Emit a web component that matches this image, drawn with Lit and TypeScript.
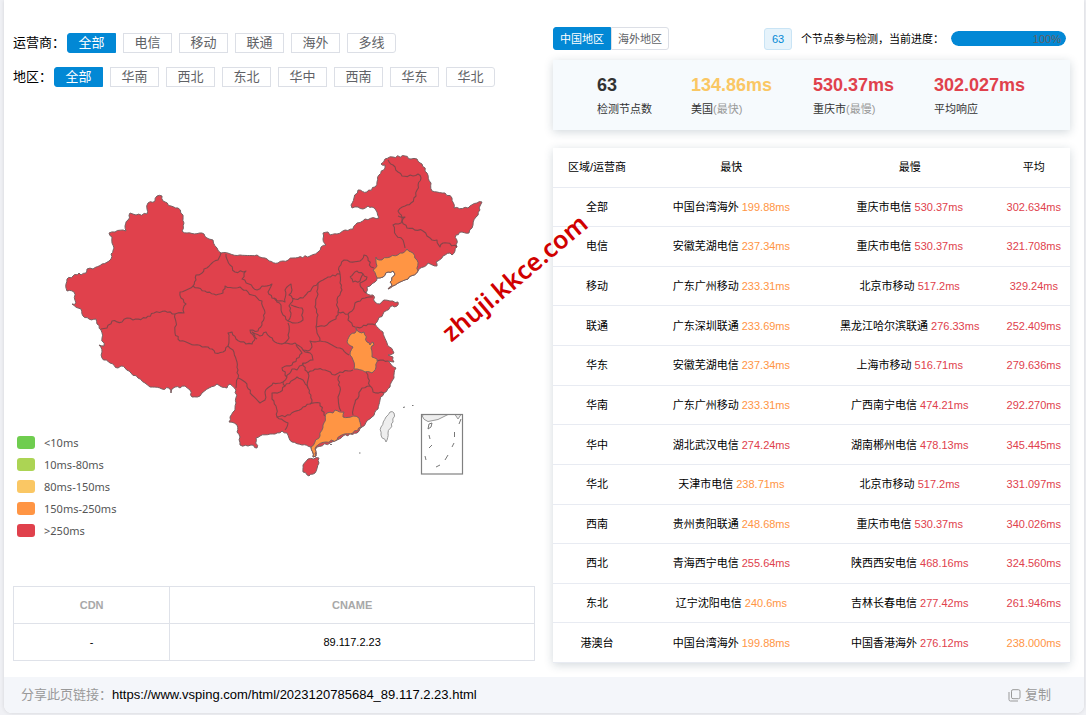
import { LitElement, html, css, svg } from "lit";
import { customElement, state } from "lit/decorators.js";
import { classMap } from "lit/directives/class-map.js";

type Level = "warn" | "bad";
interface Row {
  name: string;
  fast: string;
  fastMs: string;
  fastLevel: Level;
  slow: string;
  slowMs: string;
  avg: string;
  avgLevel: Level;
}

const row = (
  name: string, fast: string, fastMs: string, slow: string, slowMs: string, avg: string,
): Row => ({
  name, fast, fastMs, slow, slowMs, avg,
  fastLevel: parseFloat(fastMs) > 250 ? "bad" : "warn",
  avgLevel: parseFloat(avg) > 250 ? "bad" : "warn",
});

const ROWS: Row[] = [
  row("全部", "中国台湾海外", "199.88ms", "重庆市电信", "530.37ms", "302.634ms"),
  row("电信", "安徽芜湖电信", "237.34ms", "重庆市电信", "530.37ms", "321.708ms"),
  row("移动", "广东广州移动", "233.31ms", "北京市移动", "517.2ms", "329.24ms"),
  row("联通", "广东深圳联通", "233.69ms", "黑龙江哈尔滨联通", "276.33ms", "252.409ms"),
  row("华东", "安徽芜湖电信", "237.34ms", "上海市移动", "516.71ms", "279.636ms"),
  row("华南", "广东广州移动", "233.31ms", "广西南宁电信", "474.21ms", "292.270ms"),
  row("华中", "湖北武汉电信", "274.24ms", "湖南郴州电信", "478.13ms", "345.445ms"),
  row("华北", "天津市电信", "238.71ms", "北京市移动", "517.2ms", "331.097ms"),
  row("西南", "贵州贵阳联通", "248.68ms", "重庆市电信", "530.37ms", "340.026ms"),
  row("西北", "青海西宁电信", "255.64ms", "陕西西安电信", "468.16ms", "324.560ms"),
  row("东北", "辽宁沈阳电信", "240.6ms", "吉林长春电信", "277.42ms", "261.946ms"),
  row("港澳台", "中国台湾海外", "199.88ms", "中国香港海外", "276.12ms", "238.000ms"),
];

const LEGEND = [
  ["#6fcd4f", "<10ms"],
  ["#acd454", "10ms-80ms"],
  ["#fac764", "80ms-150ms"],
  ["#ff9544", "150ms-250ms"],
  ["#e0414c", ">250ms"],
];

const MAINLAND =
  "66,284 67,279 73,276 79,273 81,275 86,273 87,269 93,269 102,264 111,259 111,254 114,248 112,243 112,237 109,233 115,232 123,230 126,231 125,226 128,220 130,213 136,215 147,214 147,209 148,203 155,201 157,196 162,196 163,201 171,206 178,208 183,215 184,223 182,231 187,233 202,233 209,239 213,240 217,248 221,253 240,255 257,255 265,258 269,261 278,263 293,258 310,256 318,252 321,247 326,245 323,239 323,233 328,232 330,235 337,234 345,230 353,229 357,223 365,219 379,218 377,212 372,207 368,206 363,209 358,207 352,208 351,205 354,198 358,190 367,192 375,187 377,182 379,175 385,168 385,165 381,164 385,159 393,157 405,156 411,159 417,159 422,164 427,173 431,183 432,191 437,192 445,193 452,198 454,208 468,208 477,203 482,202 480,206 480,210 476,217 473,225 469,233 462,232 456,235 457,247 455,251 452,255 450,253 443,256 436,262 437,266 428,263 418,271 408,279 400,282 388,289 392,286 390,282 395,274 393,271 388,272 383,277 377,278 375,282 370,286 367,287 366,293 373,295 375,302 380,304 384,300 390,301 398,302 397,306 390,307 383,314 378,320 375,324 383,332 387,343 394,353 388,355 393,357 394,362 388,361 396,368 394,378 390,387 384,393 380,400 378,409 372,417 362,427 357,433 343,436 330,443 317,447 315,450 316,456 313,457 311,447 302,445 292,442 289,438 287,433 282,431 275,434 270,434 260,436 256,438 257,448 251,445 248,446 240,445 240,437 237,432 237,425 229,422 230,417 235,410 236,403 236,390 230,384 227,388 220,386 217,384 209,388 202,393 200,396 192,397 190,390 185,386 180,388 175,387 172,389 171,393 169,388 162,389 150,387 145,383 138,378 131,373 125,368 121,366 118,368 110,363 102,358 102,352 99,345 104,346 102,338 101,330 97,324 96,319 89,319 83,316 81,309 72,304 76,303 74,292 67,291";

const BORDERS = [
  "221,253 218,260 211,264 204,269 202,273 196,275 196,280 193,286",
  "193,286 180,292 181,298 186,304 183,310 184,313 175,314",
  "175,314 165,311 154,313 146,318 133,320 127,318 122,322 112,321 107,328 101,329",
  "175,314 176,322 175,333 180,341 194,345 208,347 212,349 215,353 223,352 228,346 229,340 228,333 232,332 236,339 246,344 252,344 255,338 252,332 260,336 266,332 270,337 277,343 282,344",
  "193,286 205,291 216,295 223,293 225,286 233,288 240,287 252,295 262,301 265,313 262,325 258,331 250,330 254,337 257,339",
  "226,254 230,265 235,272 246,271 242,279 249,284 257,290 262,286 272,284 268,292 272,298 278,301 285,302 285,290 291,284 292,290 289,295 295,299 303,298 308,292 318,283 328,277 340,274 339,267 344,260 350,262 360,261 364,255 368,258 371,267 374,268",
  "388,160 393,165 398,172 402,176 413,176 418,174 421,178 417,190 416,196 411,203 405,206 398,211 402,218 401,223 393,225 396,235 403,240 405,248",
  "398,216 405,217 402,221 407,228 423,231 427,236 432,240 437,240 440,247 443,243 447,243 457,247",
  "350,277 357,271 363,274 360,281 353,282 350,277",
  "363,274 367,277 364,281 360,283 363,289 366,293",
  "340,274 340,283 342,290 337,300 338,312 336,319 327,325 316,327",
  "318,283 317,297 315,307 318,315 316,327 317,333 320,341 332,345 340,348 349,355",
  "338,312 348,314 352,311 355,303 365,298 373,297",
  "348,314 348,320 355,327 362,327 368,324 375,325",
  "320,341 310,341 312,347 310,350 303,350 295,343 282,344 289,338 289,332 288,323",
  "274,298 281,305 283,315 288,321 291,313 289,306 293,299",
  "291,305 302,308 303,320 295,323 288,321",
  "228,346 233,350 237,362 238,378 236,388",
  "238,378 245,382 252,395 260,403 265,400 265,392 273,383 283,382 287,377 282,368 292,365 302,353 296,345",
  "303,350 312,355 313,360 303,363 305,370 308,373",
  "303,363 297,370 292,369 286,377",
  "283,382 285,386 297,377 303,380 308,388",
  "308,373 315,369 325,370 335,375 340,372 353,370",
  "308,373 308,388 312,400 310,404 303,407 290,415 277,417 276,406 272,399 272,393 280,392 285,386",
  "277,417 288,423 285,430",
  "310,404 320,403 324,415 327,417",
  "340,375 338,380 340,387 338,397 341,411",
  "353,415 355,403 362,388 370,386",
  "366,372 368,378 370,386 373,392 384,393",
  "377,361 383,360 388,361",
];

const LIAONING =
  "376,257 379,260 390,257 403,253 407,249 413,253 417,260 418,271 408,279 400,282 388,289 392,286 390,282 395,274 393,271 388,272 383,277 377,278 373,270 377,266";
const ANHUI =
  "356,328 359,332 364,332 367,342 370,345 373,342 374,345 371,348 372,357 377,359 376,367 372,373 365,372 354,369 353,360 350,355 353,347 347,342 350,335 355,333";
const GUANGDONG =
  "327,413 333,413 335,410 344,412 343,417 353,416 359,418 361,427 353,433 340,436 337,440 326,442 318,445 315,449 316,456 313,457 311,447 320,436 323,425";
const HAINAN = "308,459 319,458 319,463 315,473 309,476 303,472 303,465";
const TAIWAN = "390,412 394,413 393,422 388,433 386,442 381,435 381,427 386,417";

/** Turns a coarse outline into a ragged border line; the same segment always gets the same bends. */
function border(points: string, closed = false): string {
  const pts = points.split(" ").map((p) => p.split(",").map(Number));
  if (closed) pts.push(pts[0]);
  let d = `M${pts[0]}`;
  for (let i = 1; i < pts.length; i++) {
    const [a, b] = [pts[i - 1], pts[i]];
    const length = Math.hypot(b[0] - a[0], b[1] - a[1]);
    const steps = Math.max(1, Math.round(length / 2.6));
    for (let s = 1; s < steps; s++) {
      const t = s / steps;
      const x = a[0] + (b[0] - a[0]) * t;
      const y = a[1] + (b[1] - a[1]) * t;
      const n = Math.sin(x * 12.9 + y * 78.2) * 0.9;
      d += `L${(x - ((b[1] - a[1]) / length) * n).toFixed(1)} ${(y + ((b[0] - a[0]) / length) * n).toFixed(1)}`;
    }
    d += `L${b}`;
  }
  return closed ? d + "Z" : d;
}

@customElement("china-map")
export class ChinaMap extends LitElement {
  static styles = css`
    :host { display: block; }
    .map { display: block; width: 100%; height: auto; }
    .area { stroke: #776062; stroke-width: 1; stroke-linejoin: round; }
    .red { fill: #e0414c; }
    .orange { fill: #ff9544; }
    .empty { fill: #eee; stroke: #999; }
    .line { fill: none; stroke: #85454a; stroke-width: 1.1; stroke-linejoin: round; }
    .frame { fill: none; stroke: #808080; stroke-width: 1.2; }
    .dash { fill: none; stroke: #777; stroke-width: 1; }
  `;

  render() {
    return html`
      <svg class="map" viewBox="13 150 522 396" role="img" aria-label="中国地图">
        <path class="area red" d=${border(MAINLAND, true)} />
        ${BORDERS.map((b) => svg`<path class="line" d=${border(b)} />`)}
        ${[LIAONING, ANHUI, GUANGDONG].map((p) => svg`<path class="area orange" d=${border(p, true)} />`)}
        <path class="area red" d=${border(HAINAN, true)} />
        <path class="area empty" d=${border(TAIWAN, true)} />
        <path class="area empty" d="M422 415.500L424 414.500H448Q438 421 428 421.500Q423 420 422 415.500ZM455 414.500H461L458 419Z" />
        <rect class="frame" x="421.500" y="414.500" width="41" height="59.500" />
        <path class="dash" d="M429 424l3-1l-1 4l-3 2zM429 435l1 4M429 448l3-3M425 456l1 4M436 467l4-2M445 460l3-5M452 447l2-4M454.500 437v-5M459 424l2-5M403 407.500l2-.5M412 405.500h1.500M359 453h1.500M330 444.500h2" />
      </svg>
    `;
  }
}

@customElement("app-root")
export class AppRoot extends LitElement {
  @state() private carrier = "全部";
  @state() private region = "全部";
  @state() private scope = "中国地区";

  static styles = css`
    :host {
      display: block;
      box-sizing: border-box;
      min-height: 100vh;
      padding: 0 2px 2px 4px;
      background: #f0f1f5;
      font: 11px/16px "Liberation Sans", "Noto Sans CJK SC", sans-serif;
      color: #000;
    }
    * { box-sizing: border-box; }
    button { font: inherit; cursor: pointer; }
    .card {
      position: relative;
      background: #fff;
      border-radius: 0 0 8px 8px;
      box-shadow: 0 0 4px rgba(0, 0, 0, 0.12);
      overflow: hidden;
    }
    .columns {
      display: grid;
      grid-template-columns: 522fr 517fr;
      gap: 18px;
      padding: 27px 14px 14px 9px;
    }
    .left { padding-top: 6px; }
    .filter {
      display: flex;
      align-items: center;
      gap: 2px;
      height: 20px;
      margin-bottom: 14px;
      font-size: 13px;
    }
    .options { display: flex; gap: 7px; }
    .option {
      width: 49px;
      height: 20px;
      padding: 0;
      border: 1px solid #dcdfe6;
      background: #fff;
      color: #606266;
      line-height: 16px;
    }
    .option:first-child { border-radius: 3px 0 0 3px; }
    .option:last-child { border-radius: 0 3px 3px 0; }
    .option.active { background: #0288d5; border-color: #0288d5; color: #fff; }
    .mapbox { display: grid; margin-top: 63px; }
    .mapbox > * { grid-area: 1 / 1; }
    .legend {
      align-self: end;
      justify-self: start;
      display: grid;
      gap: 9px;
      margin: 0;
      padding: 0 0 9px 4px;
      list-style: none;
      font: 11px/13px "Noto Sans", sans-serif;
      color: #555;
    }
    .legend li { display: flex; gap: 9px; }
    .swatch { width: 18px; height: 13px; border-radius: 3px; }
    table { width: 100%; border-collapse: collapse; table-layout: fixed; text-align: center; }
    th, td { padding: 0; font-weight: normal; }
    .cname { margin-top: 40px; }
    .cname th, .cname td { height: 37px; border: 1px solid #dfe2e9; }
    .cname th { color: #a8a8a8; font-weight: bold; }
    .col-cdn { width: 30%; }
    .toolbar { display: flex; align-items: center; height: 23px; padding-right: 4px; }
    .tabs { display: flex; margin-right: auto; }
    .tab {
      height: 23px;
      padding: 0 6px;
      border: 1px solid #dcdfe6;
      background: #fff;
      color: #606266;
      line-height: 16px;
    }
    .tab:first-child { border-radius: 3px 0 0 3px; }
    .tab:last-child { border-radius: 0 3px 3px 0; }
    .tab.active { background: #0288d5; border-color: #0288d5; color: #fff; }
    .badge {
      width: 28px;
      height: 22px;
      margin-right: 9px;
      border: 1px solid #c9e4f5;
      border-radius: 3px;
      background: #e6f3fb;
      color: #0288d5;
      line-height: 20px;
      text-align: center;
    }
    .bar {
      width: 115px;
      height: 15px;
      margin-left: 7px;
      border-radius: 8px;
      background: #ebeef5;
      overflow: hidden;
    }
    .fill {
      height: 100%;
      padding-right: 5px;
      border-radius: 8px;
      background: #0288d5;
      color: #606266;
      text-align: right;
    }
    .panel { box-shadow: 0 2px 9px rgba(30, 60, 80, 0.2); }
    .stats {
      display: grid;
      grid-template-columns: 94fr 122fr 121fr 136fr;
      margin: 10px 0 18px;
      padding: 14px 0 13px 44px;
      background: #f6fafd;
      color: #333;
    }
    .value { font-size: 18px; font-weight: bold; line-height: 22px; }
    .label { margin-top: 5px; }
    .muted { color: #999; }
    .gold { color: #fac764; }
    .warn { color: #ff9544; }
    .bad { color: #e0414c; }
    .results { height: 515px; background: #fff; }
    .results th, .results td { height: 39px; border-bottom: 1px solid #e8ebf2; }
    .c1 { width: 17%; }
    .c2 { width: 35%; }
    .c3 { width: 34%; }
    .c4 { width: 14%; }
    .share {
      display: flex;
      align-items: center;
      height: 36px;
      padding: 0 33px 0 17px;
      background: #f4f6fa;
      color: #999;
      font-size: 13px;
    }
    .link { color: #000; text-decoration: none; }
    .copy {
      display: flex;
      align-items: center;
      gap: 4px;
      margin-left: auto;
      padding: 0;
      border: 0;
      background: none;
      color: #999;
    }
    .icon { width: 13px; height: 13px; }
    .mark {
      position: absolute;
      left: 510px;
      top: 277px;
      transform: translate(-50%, -50%) rotate(-40deg);
      font: 600 25px/32px "Noto Sans", sans-serif;
      color: #d00000;
      white-space: nowrap;
      pointer-events: none;
    }
  `;

  private filter(label: string, names: string[], current: string, pick: (n: string) => void) {
    return html`
      <div class="filter" role="group" aria-label=${label}>
        <span>${label}：</span>
        <div class="options">
          ${names.map((n) => html`<button
            class=${classMap({ option: true, active: n === current })}
            aria-pressed=${n === current}
            @click=${() => pick(n)}
          >${n}</button>`)}
        </div>
      </div>
    `;
  }

  render() {
    return html`
      <main class="card">
        <div class="columns">
          <section class="left">
            ${this.filter("运营商", ["全部", "电信", "移动", "联通", "海外", "多线"], this.carrier, (n) => (this.carrier = n))}
            ${this.filter("地区", ["全部", "华南", "西北", "东北", "华中", "西南", "华东", "华北"], this.region, (n) => (this.region = n))}
            <div class="mapbox">
              <china-map></china-map>
              <ul class="legend">
                ${LEGEND.map(([color, text]) => html`<li><span class="swatch" style="background:${color}"></span>${text}</li>`)}
              </ul>
            </div>
            <table class="cname">
              <colgroup><col class="col-cdn" /><col /></colgroup>
              <thead><tr><th>CDN</th><th>CNAME</th></tr></thead>
              <tbody><tr><td>-</td><td>89.117.2.23</td></tr></tbody>
            </table>
          </section>
          <section>
            <div class="toolbar">
              <div class="tabs">
                ${["中国地区", "海外地区"].map((n) => html`<button
                  class=${classMap({ tab: true, active: n === this.scope })}
                  @click=${() => (this.scope = n)}
                >${n}</button>`)}
              </div>
              <span class="badge">63</span>
              <span>个节点参与检测，当前进度：</span>
              <div class="bar" role="progressbar" aria-valuenow="100" aria-label="当前进度">
                <div class="fill" style="width:100%">100%</div>
              </div>
            </div>
            <div class="stats panel">
              <div><div class="value">63</div><div class="label">检测节点数</div></div>
              <div><div class="value gold">134.86ms</div><div class="label">美国<span class="muted">(最快)</span></div></div>
              <div><div class="value bad">530.37ms</div><div class="label">重庆市<span class="muted">(最慢)</span></div></div>
              <div><div class="value bad">302.027ms</div><div class="label">平均响应</div></div>
            </div>
            <table class="results panel">
              <colgroup><col class="c1" /><col class="c2" /><col class="c3" /><col class="c4" /></colgroup>
              <thead><tr><th>区域/运营商</th><th>最快</th><th>最慢</th><th>平均</th></tr></thead>
              <tbody>
                ${ROWS.map((r) => html`<tr>
                  <td>${r.name}</td>
                  <td>${r.fast} <span class=${r.fastLevel}>${r.fastMs}</span></td>
                  <td>${r.slow} <span class="bad">${r.slowMs}</span></td>
                  <td class=${r.avgLevel}>${r.avg}</td>
                </tr>`)}
              </tbody>
            </table>
          </section>
        </div>
        <footer class="share">
          <span>分享此页链接：</span>
          <a class="link" href="https://www.vsping.com/html/2023120785684_89.117.2.23.html">https://www.vsping.com/html/2023120785684_89.117.2.23.html</a>
          <button class="copy">
            <svg class="icon" viewBox="0 0 13 13" fill="none" stroke="currentColor" aria-hidden="true">
              <rect x="3.500" y=".7" width="8.500" height="9" rx="1.500" />
              <path d="M1 3v7.500q0 1.500 1.500 1.500H10" />
            </svg>复制
          </button>
        </footer>
        <div class="mark">zhuji.kkce.com</div>
      </main>
    `;
  }
}
